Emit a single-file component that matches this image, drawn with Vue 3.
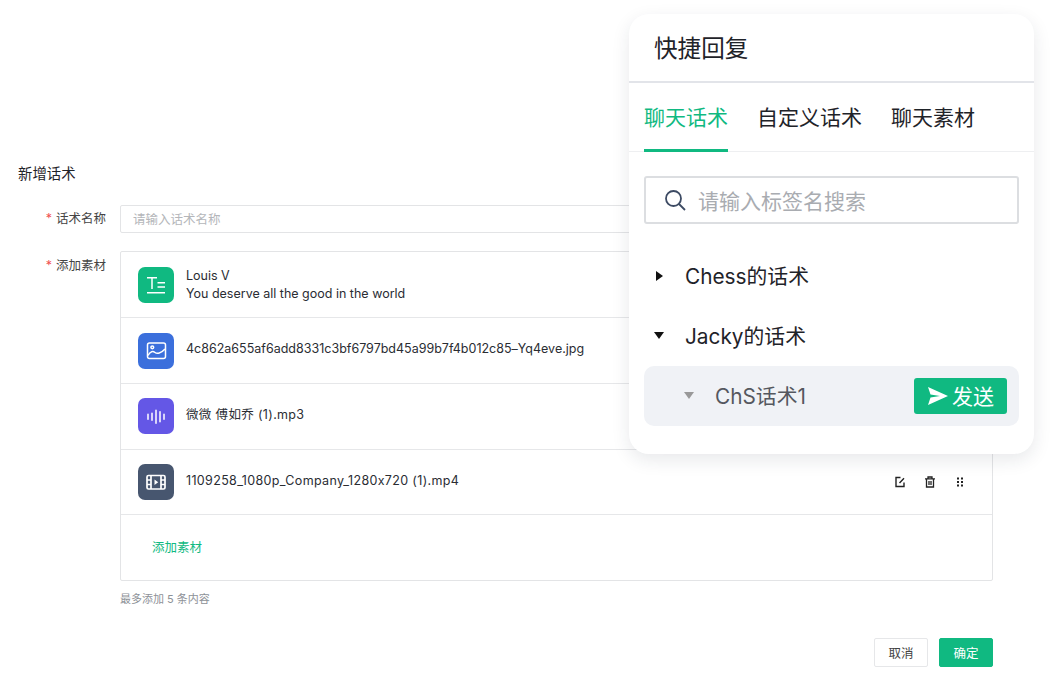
<script setup>
const items = [
  { kind: 'text', color: '#10b981', lines: ['Louis V', 'You deserve all the good in the world'] },
  { kind: 'image', color: '#3b6fdc', lines: ['4c862a655af6add8331c3bf6797bd45a99b7f4b012c85–Yq4eve.jpg'] },
  { kind: 'audio', color: '#6457e6', lines: ['微微 傅如乔 (1).mp3'], spaced: true },
  { kind: 'video', color: '#47566f', lines: ['1109258_1080p_Company_1280x720 (1).mp4'], spaced: true },
]
</script>

<template>
  <div class="page">
    <h1 class="title">新增话术</h1>
    <div class="field name-field">
      <label class="label"><i>*</i>话术名称</label>
      <div class="input">请输入话术名称</div>
    </div>
    <div class="field">
      <label class="label material-label"><i>*</i>添加素材</label>
      <div class="box">
        <div v-for="item in items" :key="item.kind" class="row">
          <span class="badge" :style="{ background: item.color }">
            <svg v-if="item.kind === 'text'" viewBox="0 0 36 36" width="36" height="36" fill="none" stroke="#fff" stroke-width="1.5">
              <path d="M9 10.700h10M14 10.700v11.300M19.500 15.700h7.500M19.500 20h7.500M9 25.700h18" />
            </svg>
            <svg v-else-if="item.kind === 'image'" viewBox="0 0 36 36" width="36" height="36" fill="none" stroke="#fff" stroke-width="1.5">
              <rect x="9.500" y="10" width="18" height="15.500" rx="2" />
              <circle cx="14.300" cy="14.300" r="1.400" />
              <path d="M10 22.500c2.500-4.500 5-4.500 7-3s6 1 10-3.500" />
            </svg>
            <svg v-else-if="item.kind === 'audio'" viewBox="0 0 36 36" width="36" height="36" fill="none" stroke="#fff" stroke-width="1.500" stroke-linecap="round">
              <path d="M10 16.200v5M14 15.200v7M18 12.200v13M22 13.700v10M26 16.200v5" />
            </svg>
            <svg v-else viewBox="0 0 36 36" width="36" height="36" fill="none" stroke="#fff" stroke-width="1.700">
              <rect x="9" y="11.500" width="18" height="13.500" rx="1.500" />
              <path d="M13 12v13M23 12v13M9 16h4M9 20.500h4M23 16h4M23 20.500h4" />
              <path d="M16.500 15.500l3.700 2.700-3.700 2.700z" fill="#fff" stroke="none" />
            </svg>
          </span>
          <div class="row-text" :class="{ spaced: item.spaced }">
            <p v-for="line in item.lines" :key="line">{{ line }}</p>
          </div>
          <div class="actions">
            <svg viewBox="0 0 12 12" width="12" height="12" fill="none" stroke="#222" stroke-width="1.400">
              <path d="M10 6.500V10.500H2V1.500H6.500M5.500 7L10 2.200" />
            </svg>
            <svg viewBox="0 0 12 12" width="12" height="12" fill="none" stroke="#222" stroke-width="1.300">
              <path d="M1 2.800h10M4 2.500V1h4v1.500M2.500 3v8h7V3M5 5v4M7 5v4" />
            </svg>
            <svg viewBox="0 0 12 12" width="12" height="12" fill="#222">
              <rect x="3" y="1.500" width="2" height="2" /><rect x="7" y="1.500" width="2" height="2" />
              <rect x="3" y="5" width="2" height="2" /><rect x="7" y="5" width="2" height="2" />
              <rect x="3" y="8.500" width="2" height="2" /><rect x="7" y="8.500" width="2" height="2" />
            </svg>
          </div>
        </div>
        <div class="add-row">添加素材</div>
      </div>
    </div>
    <p class="hint">最多添加 5 条内容</p>
    <div class="footer">
      <button class="btn">取消</button>
      <button class="btn primary">确定</button>
    </div>

    <aside class="panel">
      <div class="panel-head">快捷回复</div>
      <div class="tabs">
        <span class="tab active">聊天话术</span>
        <span class="tab">自定义话术</span>
        <span class="tab">聊天素材</span>
      </div>
      <div class="search">
        <svg viewBox="0 0 24 24" width="24" height="24" fill="none" stroke="#3c4a63" stroke-width="1.800">
          <circle cx="10.500" cy="10.500" r="7.500" />
          <path d="M16 16l6 6" />
        </svg>
        <span>请输入标签名搜索</span>
      </div>
      <div class="tree">
        <div class="node"><span class="tri right"></span>Chess的话术</div>
        <div class="node"><span class="tri down"></span>Jacky的话术</div>
        <div class="node child">
          <span class="tri down grey"></span>ChS话术1
          <button class="send">
            <svg viewBox="0 0 22 20" width="22" height="20" fill="#fff">
              <path d="M1 1l20 9-20 9 2.500-7.500L13 10 3.500 8.500z" />
            </svg>
            发送
          </button>
        </div>
      </div>
    </aside>
  </div>
</template>

<style scoped>
.page {
  position: relative;
  height: 694px;
  box-sizing: border-box;
  padding: 164px 58px 0 18px;
  font-family: Inter, "Noto Sans CJK SC", sans-serif;
  font-feature-settings: "calt" 0;
  color: #222;
  background: #fff;
  overflow: hidden;
}
.title {
  margin: 0 0 22px;
  font-size: 14.400px;
  line-height: 19px;
  font-weight: 400;
  color: #1f2329;
}
.field {
  display: flex;
  gap: 14px;
}
.name-field {
  margin-bottom: 18px;
}
.label {
  width: 88px;
  flex: none;
  text-align: right;
  font-size: 12.500px;
  line-height: 28px;
  color: #444;
}
.material-label {
  line-height: 30px;
}
.label i {
  color: #f0504f;
  font-style: normal;
  margin-right: 4px;
}
.input {
  flex: 1;
  height: 28px;
  box-sizing: border-box;
  border: 1px solid #e3e4e6;
  border-radius: 2px;
  padding: 0 12px;
  font-size: 12.500px;
  line-height: 27px;
  color: #b4b6ba;
}
.box {
  flex: 1;
  height: 330px;
  box-sizing: border-box;
  border: 1px solid #e3e4e6;
  border-radius: 2px;
  padding-top: 0.700px;
  display: flex;
  flex-direction: column;
}
.row {
  flex: none;
  height: 65.700px;
  box-sizing: border-box;
  border-bottom: 1px solid #e6e7e9;
  padding: 0 26px 0 17px;
  display: flex;
  align-items: center;
  gap: 12px;
}
.badge {
  width: 36px;
  height: 36px;
  border-radius: 7px;
  flex: none;
  display: block;
}
.badge svg {
  display: block;
}
.row-text {
  flex: 1;
  font-size: 12.500px;
  line-height: 18px;
  color: #2a2d33;
}
.spaced {
  letter-spacing: 0.340px;
}
.row-text p {
  margin: 0;
}
.row-text p:only-child {
  margin-bottom: 3px;
}
.actions {
  display: flex;
  gap: 18px;
}
.add-row {
  flex: 1;
  min-height: 0;
  padding-left: 31px;
  font-size: 12.500px;
  line-height: 65px;
  color: #10b981;
}
.hint {
  margin: 10px 0 0 102px;
  font-size: 11px;
  line-height: 16px;
  color: #8d9197;
}
.footer {
  margin-top: 31px;
  display: flex;
  justify-content: flex-end;
  gap: 11px;
}
.btn {
  width: 54px;
  height: 29px;
  border: 1px solid #e6e7e9;
  border-radius: 2px;
  background: #fff;
  font: inherit;
  font-size: 12.500px;
  color: #444;
  padding: 0;
}
.primary {
  background: #10b981;
  border-color: #10b981;
  color: #fff;
}
.panel {
  position: absolute;
  left: 629px;
  top: 14px;
  width: 405px;
  height: 440px;
  box-sizing: border-box;
  background: #fff;
  border-radius: 20px;
  box-shadow: 0 6px 18px rgba(30, 40, 60, 0.1);
}
.panel-head {
  height: 69px;
  box-sizing: border-box;
  border-bottom: 2px solid #e2e4e9;
  padding-left: 25px;
  font-size: 23.600px;
  line-height: 69px;
  color: #1f2329;
}
.tabs {
  height: 69px;
  box-sizing: border-box;
  border-bottom: 1px solid #eeeff1;
  padding-left: 15px;
  display: flex;
  gap: 29px;
  font-size: 21px;
  line-height: 69px;
  color: #1f2329;
}
.tab {
  height: 69px;
  box-sizing: border-box;
}
.active {
  color: #10b981;
  border-bottom: 3px solid #10b981;
}
.search {
  margin: 24px 15px 0;
  height: 48px;
  box-sizing: border-box;
  border: 2px solid #dcdee1;
  border-radius: 3px;
  padding-left: 17px;
  display: flex;
  align-items: center;
  gap: 11px;
  font-size: 21px;
  color: #a9acb1;
}
.tree {
  margin: 22px 15px 0;
  font-size: 20.800px;
  color: #1f2329;
}
.node {
  position: relative;
  height: 60px;
  box-sizing: border-box;
  padding-bottom: 3px;
  display: flex;
  align-items: center;
  padding-left: 41px;
}
.child {
  background: #f0f2f6;
  border-radius: 10px;
  padding-left: 71px;
  color: #55585f;
}
.tri {
  position: absolute;
  width: 0;
  height: 0;
}
.right {
  left: 12px;
  top: 25px;
  border-top: 5px solid transparent;
  border-bottom: 5px solid transparent;
  border-left: 7px solid #111;
}
.down {
  left: 10px;
  top: 26px;
  border-left: 5px solid transparent;
  border-right: 5px solid transparent;
  border-top: 7px solid #111;
}
.grey {
  left: 40px;
  border-top-color: #999;
}
.send {
  position: absolute;
  right: 12px;
  top: 12px;
  width: 93px;
  height: 36px;
  border: 0;
  border-radius: 3px;
  background: #10b981;
  color: #fff;
  font: inherit;
  font-size: 21px;
  padding: 0 0 3px;
  display: flex;
  align-items: center;
  justify-content: center;
  gap: 3px;
}
.send svg {
  margin-top: 3px;
}
</style>
